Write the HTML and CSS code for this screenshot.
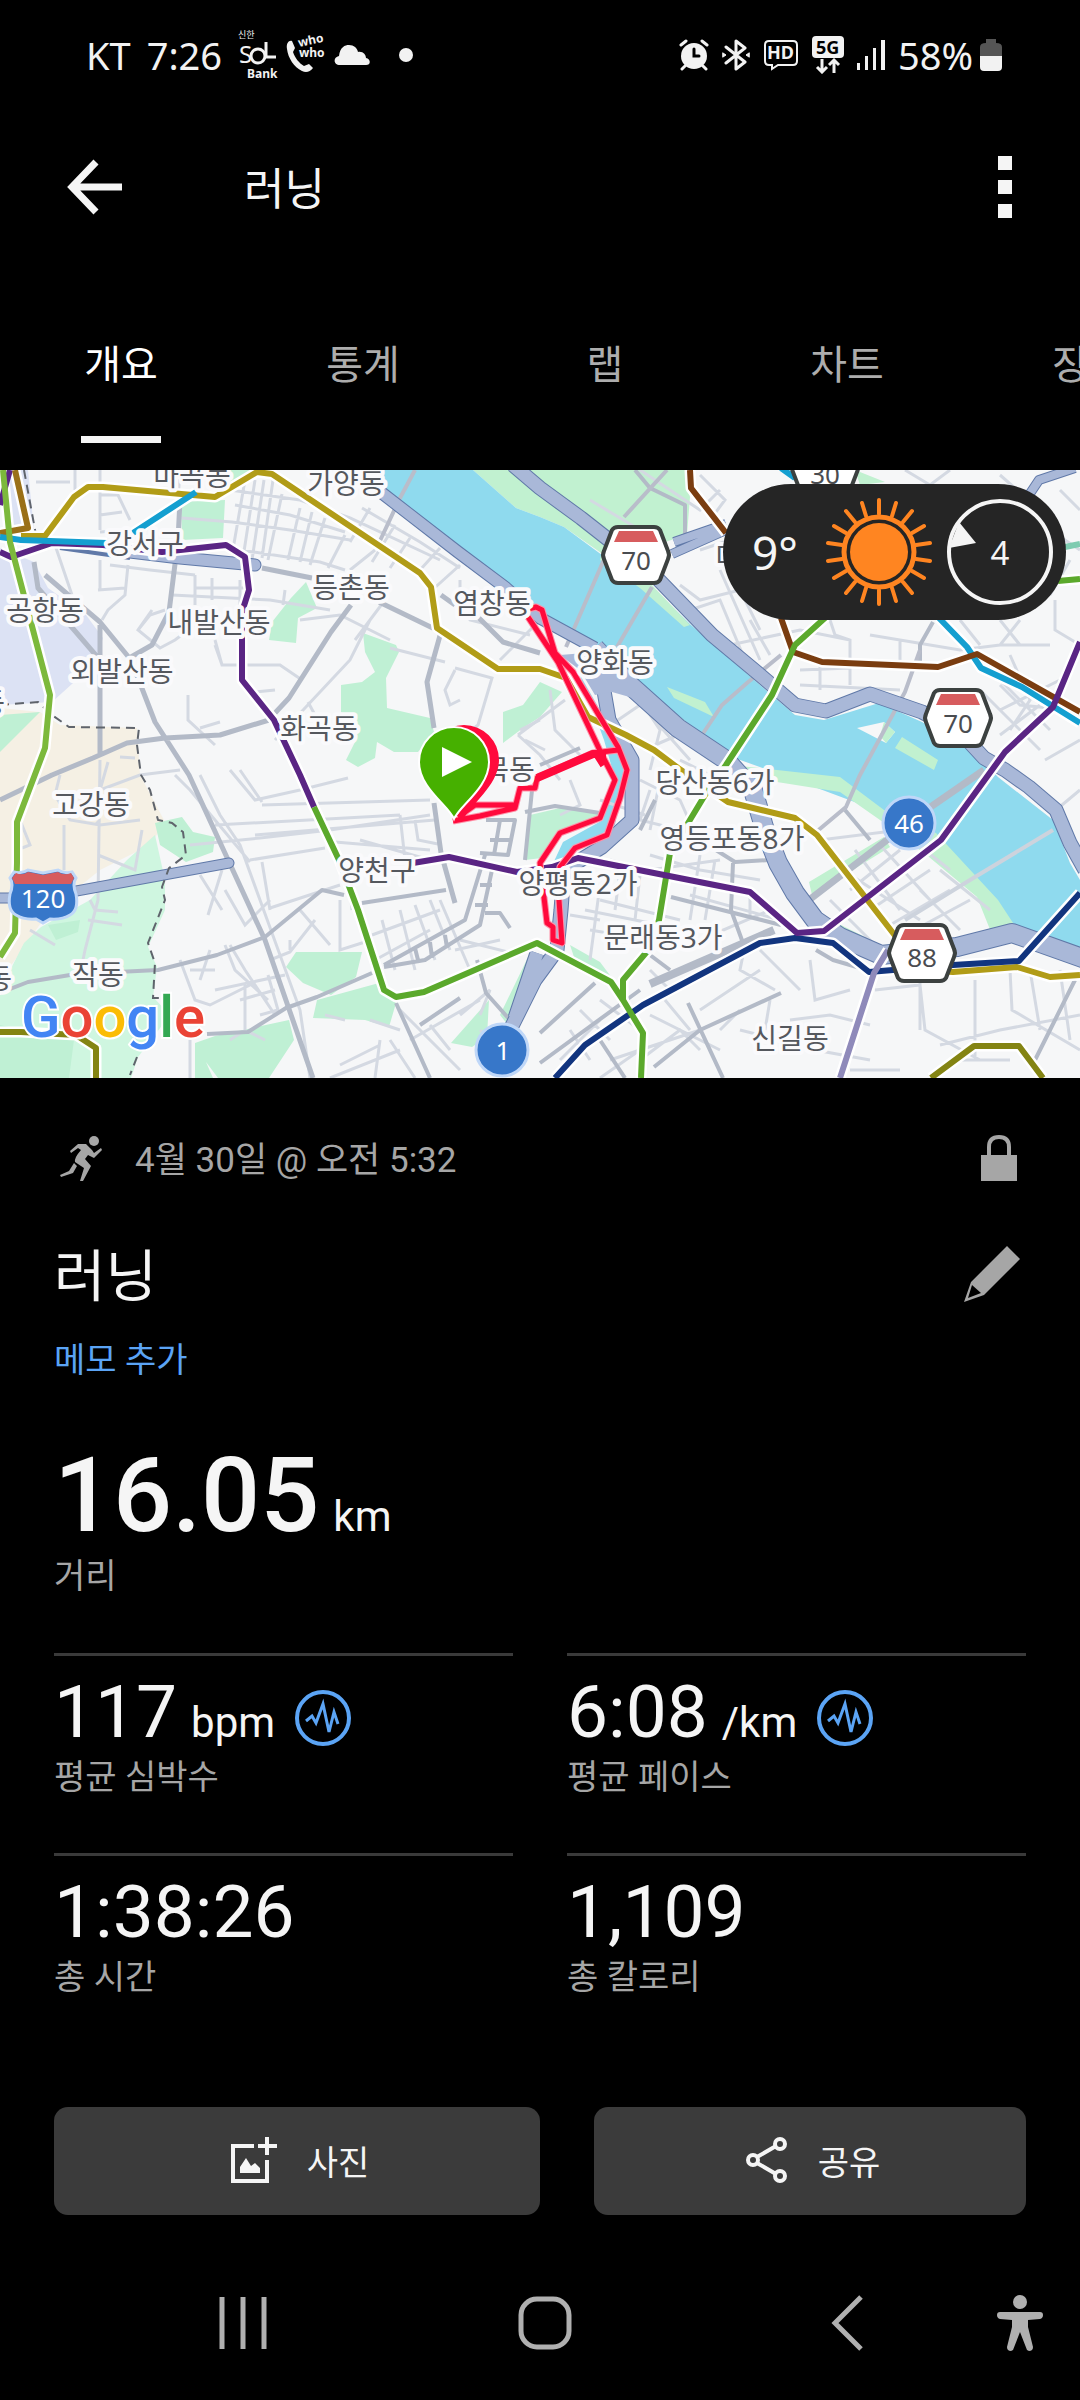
FILE: index.html
```html
<!DOCTYPE html>
<html lang="ko">
    <head>
        <meta charset="UTF-8" />
        <meta name="viewport" content="width=device-width, initial-scale=1.0" />
        <title>러닝</title>
        <link rel="stylesheet" href="styles.css">
    </head>
    <body>
        <div class="status-bar">
            <div class="status-left">
                <span>KT</span>
                <span>7:26</span>
                <div class="status-apps">
                    <svg width="42" height="56" viewBox="0 -2 42 56" fill="none" stroke="#f2f2f2" stroke-width="3">
                        <text x="0" y="9" class="app-tiny">신한</text>
                        <text x="1" y="34" class="app-sol">S</text>
                        <circle cx="20" cy="27" r="7" />
                        <path d="M28 13V28H38" />
                        <text x="9" y="49" class="app-bank">Bank</text>
                    </svg>
                    <svg width="44" height="48" viewBox="0 -6 44 48" fill="#f2f2f2">
                        <path d="M2 12C1 6 4 3 7 4L10 11L8 15C10 21 14 26 19 29L24 27L28 31C25 35 21 36 17 34C9 30 3 21 2 12Z" />
                        <text x="14" y="10" class="app-who" transform="rotate(-12 14 10)">who</text>
                        <text x="14" y="20" class="app-who">who</text>
                    </svg>
                    <svg width="36" height="22" viewBox="0 0 36 22" fill="#f2f2f2">
                        <path d="M6 21C-1 21-1 13 5 12C6 3 11 1 15 1C20 1 23 4 24 8C29 7 32 11 32 14C37 15 37 21 32 21Z" />
                    </svg>
                    <span class="more-dot"></span>
                </div>
            </div>
            <div class="status-right">
                <svg width="30" height="32" viewBox="0 0 30 32" fill="none" stroke="#f2f2f2" stroke-width="3" stroke-linecap="round">
                    <circle cx="15" cy="17" r="13" fill="#f2f2f2" stroke="none" />
                    <path d="M2 6L7 2M28 6L23 2M6 27L3 30M24 27L27 30" />
                    <path d="M15 10V17H20" stroke="#000" />
                </svg>
                <svg width="28" height="32" viewBox="0 0 28 32" fill="none" stroke="#f2f2f2" stroke-width="3" stroke-linejoin="round" stroke-linecap="round">
                    <path d="M4 8L23 23L14 30V2L23 9L4 24" />
                    <path d="M1 14L4 16L1 18ZM27 14L24 16L27 18Z" stroke-width="1" fill="#f2f2f2" />
                </svg>
                <svg width="36" height="32" viewBox="0 0 36 32" fill="none" stroke="#f2f2f2" stroke-width="2">
                    <path d="M6 2H30Q34 2 34 6V22Q34 26 30 26H15L9 30V26H6Q2 26 2 22V6Q2 2 6 2Z" />
                    <text x="4" y="20" class="hd">HD</text>
                </svg>
                <svg width="32" height="38" viewBox="0 0 32 38" fill="none" stroke="#f2f2f2" stroke-width="3">
                    <rect x="0" y="0" width="32" height="22" rx="4" fill="#f2f2f2" stroke="none" />
                    <text x="4" y="18" class="five-g">5G</text>
                    <path d="M10 23V35M5 31L10 36L15 31M22 37V25M17 29L22 24L27 29" />
                </svg>
                <svg width="28" height="30" viewBox="0 0 28 30" fill="#f2f2f2">
                    <rect x="0" y="23" width="3" height="7" />
                    <rect x="8" y="16" width="3" height="14" />
                    <rect x="16" y="8" width="3" height="22" />
                    <rect x="24" y="0" width="4" height="30" />
                </svg>
                <span class="battery-text">58%</span>
                <svg width="22" height="32" viewBox="0 0 22 32">
                    <path d="M6 0H16V4Q22 4 22 8V17H0V8Q0 4 6 4Z" fill="#555" />
                    <path d="M0 17H22V28Q22 32 18 32H4Q0 32 0 28Z" fill="#f2f2f2" />
                </svg>
            </div>
        </div>

        <header class="app-bar">
            <button class="icon-button" aria-label="뒤로">
                <svg width="56" height="56" viewBox="0 0 56 56" fill="none" stroke="#f5f5f5" stroke-width="7">
                    <path d="M29 3L5 28L29 53M6 28H55" />
                </svg>
            </button>
            <h1>러닝</h1>
            <button class="icon-button menu" aria-label="메뉴">
                <svg width="14" height="62" viewBox="0 0 14 62" fill="#f5f5f5">
                    <rect width="14" height="14" />
                    <rect y="24" width="14" height="14" />
                    <rect y="48" width="14" height="14" />
                </svg>
            </button>
        </header>

        <nav class="tabs">
            <a href="#overview" class="tab active">개요</a>
            <a href="#stats" class="tab">통계</a>
            <a href="#laps" class="tab">랩</a>
            <a href="#charts" class="tab">차트</a>
            <a href="#gear" class="tab">장비</a>
        </nav>

        <div class="map">
            <svg class="map-canvas" viewBox="0 0 1080 608">
                <defs>
                    <g id="hex">
                        <path d="M-18 -28H18Q22 -28 24 -25L32 -4Q34 0 32 4L24 25Q22 28 18 28H-18Q-22 28 -24 25L-32 4Q-34 0 -32 -4L-24 -25Q-22 -28 -18 -28Z" fill="#fff" stroke="#3c4140" stroke-width="4" />
                        <path d="M-17 -24H17L22 -13H-22Z" fill="#d75c5e" />
                    </g>
                </defs>
                <rect width="1080" height="608" fill="#f6f7f8" />

                <!-- land use -->
                <path fill="#dce2f4" d="M0 78L34 92L48 118L86 145L103 168L93 195L52 232L0 235Z M8 0H28L34 60L26 50L12 62Z" />
                <path fill="#f5f0e4" d="M0 238L40 242L60 255L137 258L140 305L165 352L150 375L100 400L50 440L15 490L0 510Z" />
                <path fill="#cff6e0" d="M155 365L165 410V440L148 477L157 497L153 527L170 545L138 587L131 608H0V520L24 473L41 457L90 430L127 390Z" />
                <path fill="#bff0d4" d="M0 245L40 242L0 282Z M155 353L182 347L193 362L215 367L213 382L186 392L160 375Z M48 455L80 450L78 462L56 470Z M0 555L30 562L74 570L69 608H0Z
                    M181 32L225 30L223 68L182 70Z M225 0H265L240 18L228 16Z
                    M291 128L306 112L317 138L298 148L296 173L269 170L272 152Z
                    M363 163L396 175L399 182L386 208L387 238L430 248L434 262L418 282L394 282L377 272L375 288L358 297L346 290L355 272L341 242V215L362 212L375 202L365 182Z
                    M503 242L523 235L540 212L562 222L540 247L523 258L503 273Z
                    M296 482L362 482L356 507L331 525L303 513L286 497Z
                    M317 530L379 513L396 533L389 557L365 550L313 548Z
                    M195 573L215 566L289 550L294 570L269 608H218L206 592L213 608H195Z
                    M451 573L489 530L487 567L472 577Z M500 545L530 483L520 540L508 555Z
                    M530 345L560 338L605 345L600 350L560 363L542 388L525 390Z M570 475L600 492L612 508L575 490Z" />
                <path fill="#c1f1d0" d="M473 0H685L690 27L687 65L640 80L604 85L564 57L540 47L516 38Z M855 0L885 12L860 15Z" />

                <!-- river -->
                <path fill="#8fdaee" d="M383 0H473L516 38L540 47L564 57L602 85L650 115L691 155L760 215L795 245L824 250L879 233L922 252L970 278L998 307L1053 350L1070 393L1080 410V490L1015 460L998 433L963 410L884 343L777 303L726 285L633 212L597 175L540 145L510 118L383 20Z" />
                <path fill="#8fdaee" d="M580 205L600 240L618 280L624 300L615 355L570 385L550 400L563 372L603 350L614 305L604 270Z" />
                <path fill="#c1f1d0" d="M633 208L650 222L690 255L740 296L777 300L840 307L884 340L936 363L998 430L1019 462H991L977 427L929 387L880 350L840 322L777 312L726 292L660 240Z
                    M667 217L705 232L714 247L674 228Z M902 267L938 290L934 300L895 278Z M809 412L884 367L890 377L812 425Z M815 442L871 470L900 484L840 466Z M602 80L650 113L690 155L684 157L640 118L600 90Z" />
                <path fill="#f6f7f8" d="M857 258L884 252L895 262L886 273Z" />
                <path fill="#c1f1d0" d="M884 252L895 262L886 273L880 266Z" />

                <!-- minor streets -->
                <g fill="none" stroke="#d4d9e2" stroke-width="3">
                    <path d="M100 0V60M100 25H118L130 50M100 62L130 60M75 0V20M36 12H70M100 90V120M180 0L178 30M100 45L122 42M55 75L72 125M110 95L150 100L195 105
                        M182 48L232 52L290 60L350 70M230 20L300 30L350 48L440 90M235 35L290 45L345 62M240 80L320 92L345 100
                        M245 10L232 85M255 10L243 88M264 10L252 90M273 10L262 88M282 24L268 90M300 38L288 90M312 42L300 92M325 48L310 95M345 65L328 98M375 80L350 100
                        M370 38L350 72M395 55L372 92M410 68L390 98M440 78L420 100M460 95L430 122M362 38L420 72L460 98" />
                    <path d="M172 125L270 130L330 140M195 105V135M212 108V130M240 110V135M195 118H250M285 120L283 135M128 95L125 125L108 140L102 150M98 120L125 118
                        M152 140L138 160L160 178L175 170L195 155M138 160L150 145L165 140M215 170L222 195H280L302 210M222 195L215 175M188 225V250L215 275M200 258L220 252M255 222L275 220
                        M300 150L340 145L390 170M370 150L350 190L275 270M385 130L355 170M390 178L445 192M455 125L470 150L530 165M460 110V125L490 140
                        M455 200L445 220L450 235L460 230M455 198L492 208L478 255L465 265M500 190L540 150M520 260L540 250M308 232L315 245M525 270L545 280" />
                    <path d="M60 305L55 325L70 350L100 355L140 350M100 290L98 430L85 480L80 505M64 355V400M95 355L100 350M98 385L135 400L142 360M90 430L95 440L118 442M88 450L122 455M20 350L30 375L22 378M30 460L55 475M108 292L100 320L140 305L180 300M120 287L135 288" />
                    <path d="M200 305L220 345L240 375L260 430L300 540L310 608M230 300L255 330L300 320L348 308M240 300L262 332M262 335L430 330M255 365L435 350M190 375L260 368L330 360L430 345
                        M215 355L400 345M250 390L325 378M262 392L270 440M335 372L430 380M360 370L430 390L435 385M400 345L405 390M415 350L418 370L438 374M175 305L190 320L250 392
                        M200 405L222 440M222 400L208 445M225 420L245 455L270 430M230 475L245 500L275 545M270 490L290 482L315 450M300 440L330 475M290 470V480M270 438L340 415M340 430V480L365 472M350 420L352 440
                        M180 490L195 530L210 535L250 515M190 500H215M210 480L200 510M225 475L235 500L268 530M215 520L285 505M240 530L275 520M245 515V560L265 570M268 505L278 540L260 545M230 570L245 560" />
                    <path d="M382 450L395 500M400 440L415 500M415 435L435 490M430 430L450 480M372 465L440 440M375 490L430 460M440 430L470 500M455 480L500 470M460 470L520 485M370 550L400 560M380 575L340 595M345 550L325 545M400 540L460 600M410 570L480 530M430 555L450 580M380 570L375 608M390 570L415 608M480 560L510 590M330 608L400 580M460 545L490 520L480 545M190 570V608" />
                    <path d="M640 310L680 330L700 375M650 320L640 350L700 365M660 310L650 360M600 330L645 345M610 390L650 400L720 390M620 400L615 440M640 405L635 450M600 430L680 450M585 440L660 455M590 460L650 470M600 415L590 490M570 445L600 450M700 385L690 450M715 390L705 450M750 420V450M650 385L700 400L760 410M690 425L780 450M700 470L770 440M720 300L740 325" />
                    <path d="M570 560L590 590M580 540L610 570M600 530L640 560M560 590L600 550M610 590L700 560M650 545L720 580M665 530L690 560M640 590L680 560L700 580M600 608L640 580M720 560L740 540M700 540L760 500M745 475L740 500L775 520M760 480L800 520M810 490L815 530L850 520M790 550L830 545L870 555M820 560L815 580L870 590M875 520L920 515L925 560L980 590M920 500V560M975 510V590M1010 500L1012 540L1080 580M1030 500L1040 560M940 575L1000 560L1080 545M1060 500L1070 570M850 600H900M960 590L1010 590M740 560L800 575M770 530L765 560M650 500L670 520" />
                    <path d="M820 370L900 360L950 400M835 395L920 450M855 380L900 440M880 375L930 430M850 420L900 380M870 440L930 400M890 455L950 420M905 465L970 430M830 430L880 480M920 420L960 460M940 400L990 440" />
                    <path d="M590 30L640 60M640 0L700 40L720 20M700 80L730 70L745 130M680 115L700 130L740 120L760 160M690 140L720 130L745 190M720 100L760 190M750 150L770 185M730 175L800 160L850 170M700 5L725 30L710 50M830 150L835 165L850 170V215M800 200L850 198M800 215L900 220M820 190V220M870 165L960 180L1000 175M900 170V190M1000 215L1020 235L1070 240M990 200L1050 260M1010 185L1030 230L1010 260M1000 240L1060 210M980 220L1040 280M1000 265L1040 235M960 150L980 175M1020 80L1050 100L1040 130M1050 60L1080 80M1055 130V160L1080 175M1000 150L1020 175M1020 150L1000 175H1050M1070 90L1050 125M905 0L930 15L950 0M1000 5L1040 40M1060 20L1080 40M1045 290L1080 270M1050 345L1080 320" />
                    <path d="M518 265L540 285L560 310M550 220L555 260L580 285M518 265L565 230M570 310L580 335L560 345M640 230L660 260L650 300M650 245L690 290M655 275L690 260M680 290L720 310M618 250L640 235" />
                </g>

                <!-- main streets -->
                <g fill="none" stroke="#b3bac7" stroke-width="5" stroke-linejoin="round">
                    <path d="M100 155V285M34 92L38 118L100 190M45 105L100 152L131 190L155 252L189 305L265 470L313 608M180 30L178 70L169 142L152 175L131 187M351 135L331 162L289 228L275 243M379 132L441 162L427 212L434 258M434 333L441 383L455 433M262 98L312 108
                        M269 250L220 265L165 268L127 273L93 288L52 305L0 330M479 148L503 172L540 183M441 125L455 135" />
                    <path d="M0 523L28 512L76 504L158 500L217 485L265 467L322 420L344 425M362 433L446 420M207 564L248 562L286 538L317 527L372 503M384 495L420 475L465 450L485 385M384 497L425 490L480 455L492 400M415 478L418 490M430 472L432 488M445 465L447 478M396 533L430 608M477 490L486 523L510 550M486 350H515L508 385L480 383M490 370H512M500 350L494 385M532 320L525 390M480 415H492M475 435H488M485 443H500L510 458M420 555L460 528" stroke-width="4" />
                    <path d="M671 427L781 455M733 393L731 440L743 473M816 480L833 490L867 500M688 533L723 608M654 597L700 560L781 523M540 563L595 513M540 593L640 520M600 570L625 608M650 485L670 500M1075 510L1050 560L1035 590M700 370L735 392L770 390M820 420L880 375M525 342L555 336L600 343M655 330L640 360M540 295L580 278" stroke-width="4" />
                    <path d="M650 514L774 460" stroke-width="8" />
                    <path d="M635 0L650 18L685 35V65M933 152L920 175V200M845 340L870 370" stroke-width="4" />
                </g>
                <g fill="none" stroke="#b9bdca" stroke-width="4">
                    <path d="M667 0L624 47M609 78L566 177M652 117L617 177M781 185L747 213L722 235L702 265M920 180L905 222L860 305L846 337L815 363M415 0L400 28L378 75" />
                    <path d="M984 300L926 340L809 430" stroke-width="7" stroke="#b3bac7" />
                    <path d="M1053 360L970 410L905 450" stroke="#cdd3dd" />
                </g>

                <!-- expressways -->
                <g fill="none" stroke="#6079a8" stroke-linejoin="round">
                    <path d="M513 -5L540 18L581 48L609 70L654 105L712 165L760 205L795 235L826 241L870 224L922 242L960 262L984 288L1005 300L1029 317L1056 340L1070 373L1085 400" stroke-width="15" />
                    <path d="M378 20L458 82L506 118L540 148L595 178" stroke-width="13" />
                    <path d="M595 178L630 215L678 258L726 290L753 320L764 357L778 393L795 423L815 450L840 467L881 485L957 477L1012 463L1085 489" stroke-width="20" />
                    <path d="M603 215L609 250L632 290V350L602 377L564 400L561 440L557 480L535 510L510 560M537 483L515 548" stroke-width="15" />
                    <path d="M674 72L726 54M672 84L726 60M1029 25L1039 10L1075 -2" stroke-width="10" />
                    <path d="M-5 428L20 428M60 424L229 393" stroke-width="11" stroke-linecap="round" />
                    <path d="M130 82L180 88L255 95" stroke-width="13" stroke-linecap="round" />
                    <path d="M60 78L130 88" stroke-width="4" />
                </g>
                <g fill="none" stroke="#a9b8d8" stroke-linejoin="round">
                    <path d="M513 -5L540 18L581 48L609 70L654 105L712 165L760 205L795 235L826 241L870 224L922 242L960 262L984 288L1005 300L1029 317L1056 340L1070 373L1085 400" stroke-width="13" />
                    <path d="M378 20L458 82L506 118L540 148L595 178" stroke-width="11" />
                    <path d="M595 178L630 215L678 258L726 290L753 320L764 357L778 393L795 423L815 450L840 467L881 485L957 477L1012 463L1085 489" stroke-width="18" />
                    <path d="M603 215L609 250L632 290V350L602 377L564 400L561 440L557 480L535 510L510 560M537 483L515 548" stroke-width="13" />
                    <path d="M674 72L726 54M672 84L726 60M1029 25L1039 10L1075 -2" stroke-width="8" />
                    <path d="M-5 428L20 428M60 424L229 393" stroke-width="9" stroke-linecap="round" />
                    <path d="M130 82L180 88L255 95" stroke-width="11" stroke-linecap="round" />
                </g>
                <path d="M560 185L597 182L622 205L640 230L612 222L595 225L580 200Z" fill="#a9b8d8" />

                <!-- city border -->
                <path d="M0 235L38 232L52 245L69 257L139 258L137 275L141 305L150 320L158 350L172 353L183 362L186 385L169 398L162 417L165 430L148 473L155 493L153 528H162M137 587L130 605M24 0L36 65" fill="none" stroke="#5f646c" stroke-width="2" stroke-dasharray="9 6" />

                <!-- subway casing -->
                <g fill="none" stroke="#fff" stroke-width="11" stroke-linejoin="round">
                    <path d="M0 82L11 87L52 73L103 75L162 82L226 75L245 87L249 120L242 142V210L274 250L300 305L314 337L339 390L358 440L384 520L396 527L424 522L537 473L611 512L623 530L643 563L641 608" />
                    <path d="M21 66H45L74 27L88 17H103L215 27L257 2L272 4L420 103L431 117L437 158L498 199H540L566 208L588 247L626 265L654 280L678 298L728 332L795 348L817 365L893 463L922 500L953 502L1017 497L1050 507L1080 505" />
                    <path d="M3 0L10 72L50 225L45 278L17 352V393L15 463L0 487M0 562H21L76 565L96 578V608M0 67L21 70L107 73M133 63L196 22M15 0L28 58L0 63" />
                    <path d="M826 147L795 175L772 225L726 295L705 325L670 383L659 450L650 478L623 510V530M413 393L449 387L517 402L552 397L578 388L750 422L797 463L824 461L941 370L1005 282L1053 237L1080 172" />
                    <path d="M690 0L691 18L726 63M781 148L793 182L822 192L938 197L977 184L1080 242M939 148L967 177L981 198L1022 217L1080 253M555 608L585 575L643 535L760 473L795 468L833 473L869 502L953 495L1019 491L1080 423M888 480L874 503L840 608M931 608L974 576H1019L1043 608M1058 111L1080 109" />
                </g>
                <g fill="none" stroke-width="6" stroke-linejoin="round">
                    <path stroke="#5a2584" d="M0 82L11 87L52 73L103 75L162 82L226 75L245 87L249 120L242 142V210L274 250L300 305L314 337M10 0L0 35" />
                    <path stroke="#9a7018" d="M15 0L28 58L0 63" />
                    <path stroke="#b19c17" d="M21 66H45L74 27L88 17H103L215 27L257 2L272 4L420 103L431 117L437 158L498 199H540L566 208L588 247L626 265L654 280L678 298L728 332L795 348L817 365L893 463L922 500L953 502L1017 497L1050 507L1080 505" />
                    <path stroke="#149fd0" d="M0 67L21 70L107 73M133 63L196 22M781 -2L795 8M939 148L967 177L981 198L1022 217L1080 253" />
                    <path stroke="#7a3d10" d="M690 0L691 18L726 63M781 148L793 182L822 192L938 197L977 184L1080 242" />
                    <path stroke="#7cb93c" d="M3 0L10 72L50 225L45 278L17 352V393L15 463L0 487" />
                    <path stroke="#848413" d="M0 562H21L76 565L96 578V608M931 608L974 576H1019L1043 608" />
                    <path stroke="#12357f" d="M555 608L585 575L643 535L760 473L795 468L833 473L869 502L953 495L1019 491L1080 423" />
                    <path stroke="#5ba92c" d="M314 337L339 390L358 440L384 520L396 527L424 522L537 473L611 512L623 530L643 563L641 608M826 147L795 175L772 225L726 295L705 325L670 383L659 450L650 478L623 510V530M1058 111L1080 109" />
                    <path stroke="#5a2584" d="M413 393L449 387L517 402L552 397L578 388L750 422L797 463L824 461L941 370L1005 282L1053 237L1080 172" />
                    <path stroke="#8f8aba" d="M888 480L874 503L840 608" />
                    <path stroke="#7ecbb0" d="M1065 77L1080 74" />
                </g>

                <!-- route -->
                <g fill="none" stroke-linejoin="round">
                    <path stroke="#ff8fa6" stroke-width="7" d="M528 147L558 192L603 287L615 310L600 348L560 363L540 393L547 453L553 457V470L562 473L559 430L560 397L575 378L607 365L620 328L627 300L618 277L573 202L555 183L542 140L536 137L528 139M618 280L593 283L537 308L535 318H520L515 338L480 346L453 351M515 335H475L458 347" />
                    <path stroke="#ff0a3c" stroke-width="5" d="M528 147L558 192L603 287L615 310L600 348L560 363L540 393L547 453L553 457V470L562 473L559 430L560 397L575 378L607 365L620 328L627 300L618 277L573 202L555 183L542 140L536 137L528 139M618 280L593 283L537 308L535 318H520L515 338L480 346L453 351M515 335H475L458 347" />
                    <path stroke="#ff0a3c" stroke-width="8" d="M606 284L593 284L537 308M597 284L604 295" />
                </g>

                <g class="place">
                    <text x="192" y="16">마곡동</text>
                    <text x="346" y="24">가양동</text>
                    <text x="145" y="84">강서구</text>
                    <text x="351" y="128">등촌동</text>
                    <text x="45" y="151">공항동</text>
                    <text x="219" y="163">내발산동</text>
                    <text x="492" y="144">염창동</text>
                    <text x="122" y="212">외발산동</text>
                    <text x="319" y="269">화곡동</text>
                    <text x="509" y="310">목동</text>
                    <text x="615" y="203">양화동</text>
                    <text x="715" y="323">당산동6가</text>
                    <text x="732" y="379">영등포동8가</text>
                    <text x="578" y="424">양평동2가</text>
                    <text x="663" y="478">문래동3가</text>
                    <text x="790" y="579">신길동</text>
                    <text x="377" y="411">양천구</text>
                    <text x="91" y="345">고강동</text>
                    <text x="98" y="515">작동</text>
                    <text x="-8" y="243">동</text>
                    <text x="-1" y="519">동</text>
                    <text x="728" y="97">디</text>
                </g>

                <g class="road-number">
                    <use href="#hex" x="825" y="-2" /><text x="825" y="14">30</text>
                    <use href="#hex" x="636" y="85" /><text x="636" y="100">70</text>
                    <use href="#hex" x="958" y="248" /><text x="958" y="263">70</text>
                    <use href="#hex" x="922" y="483" /><text x="922" y="497">88</text>
                </g>
                <g class="road-number light">
                    <circle cx="909" cy="353" r="26" /><text x="909" y="363">46</text>
                    <circle cx="502" cy="580" r="26" /><text x="503" y="590">1</text>
                    <path d="M14 402Q22 404 28 400L43 403L58 400Q64 404 72 402L76 408Q72 414 76 424Q79 440 70 445Q62 450 50 449L43 453L36 449Q24 450 16 445Q7 440 10 424Q14 414 10 408Z" />
                    <path d="M16 403Q22 406 28 402L43 405L58 402Q64 406 71 403L74 408L71 414H15L12 408Z" class="shield-top" />
                    <text x="43" y="438">120</text>
                </g>

                <text x="21" y="567" class="google"><tspan fill="#4285f4">G</tspan><tspan fill="#ea4335">o</tspan><tspan fill="#fbbc05">o</tspan><tspan fill="#4285f4">g</tspan><tspan fill="#34a853">l</tspan><tspan fill="#ea4335">e</tspan></text>

                <!-- finish pin under the start pin -->
                <path d="M463 350C458 338 429 318 429 290A34 34 0 0 1 499 290C499 315 470 335 463 350Z" fill="#ff0a3c" />
                <path d="M454 349C449 336 419 318 419 292A35 35 0 0 1 489 292C489 318 459 336 454 349Z" fill="#46b000" stroke="#fff" stroke-width="2" />
                <path d="M442 277L472 292L442 307Z" fill="#fff" />
            </svg>

            <div class="weather">
                <span class="temp">9°</span>
                <svg width="106" height="110" viewBox="-53 -55 106 110" fill="none" stroke="#ff8521" stroke-width="4" stroke-linecap="round">
                    <circle r="35" stroke-width="5" />
                    <circle r="29" fill="#ff8521" stroke="none" />
                    <path d="M0-38V-52M0 38V52M13-36L17-49M-13-36L-17-49M13 36L17 49M-13 36L-17 49M24-30L33-41M-24-30L-33-41M24 30L33 41M-24 30L-33 41M33-19L45-26M-33-19L-45-26M33 19L45 26M-33 19L-45 26M37-7L51-9M-37-7L-51-9M37 7L51 9M-37 7L-51 9" />
                </svg>
                <svg width="106" height="106" viewBox="-53 -53 106 106">
                    <circle r="51" fill="none" stroke="#f5f5f5" stroke-width="4" />
                    <path d="M-51 -4L-41 -30L-24 -9Z" fill="#f5f5f5" />
                    <text x="0" y="13" class="wind">4</text>
                </svg>
            </div>
        </div>

        <main id="overview">
            <div class="row date-row">
                <svg width="44" height="46" viewBox="0 0 44 46" fill="#a6a6a6">
                    <circle cx="34" cy="6" r="5" />
                    <path d="M18 9L26 9L32 15L34 18L41 13L42 15L34 23L28 20L25 24L31 31L23 46H20L24 33L15 27Q14 23 21 15L18 13L11 18L10 16Z" />
                    <path d="M14 28L17 31L13 38L1 42L0 40L9 36Z" />
                </svg>
                <span class="date">4월 30일 @ 오전 5:32</span>
                <svg class="end lock" width="36" height="46" viewBox="0 0 36 46" fill="#a6a6a6">
                    <rect y="20" width="36" height="26" />
                    <path d="M8 22V12Q8 2 18 2T28 12V22" fill="none" stroke="#a6a6a6" stroke-width="4" />
                </svg>
            </div>
            <div class="row title-row">
                <h2>러닝</h2>
                <button class="icon-button end" aria-label="이름 편집">
                    <svg width="58" height="58" viewBox="0 0 58 58" fill="#a6a6a6">
                        <path fill-rule="evenodd" d="M44 1L57 14L21 50L1 57L8 37ZM9 40L5 53L18 48Z" />
                    </svg>
                </button>
            </div>
            <a href="#memo" class="memo">메모 추가</a>

            <div class="distance">
                <div class="value"><strong>16.05</strong><span class="unit">km</span></div>
                <div class="label">거리</div>
            </div>

            <div class="stats">
                <div class="stat">
                    <div class="value">117<span class="unit">bpm</span>
                        <svg class="pulse" width="56" height="56" viewBox="0 0 56 56" fill="none" stroke="#5ba4f5" stroke-width="4">
                            <circle cx="28" cy="28" r="26" />
                            <path d="M11 31L17 26L21 33L28 14L34 42L39 22L43 34" stroke-width="3" />
                        </svg>
                    </div>
                    <div class="label">평균 심박수</div>
                </div>
                <div class="stat">
                    <div class="value">6:08<span class="unit">/km</span>
                        <svg class="pulse" width="56" height="56" viewBox="0 0 56 56" fill="none" stroke="#5ba4f5" stroke-width="4">
                            <circle cx="28" cy="28" r="26" />
                            <path d="M11 31L17 26L21 33L28 14L34 42L39 22L43 34" stroke-width="3" />
                        </svg>
                    </div>
                    <div class="label">평균 페이스</div>
                </div>
                <div class="stat">
                    <div class="value">1:38:26</div>
                    <div class="label">총 시간</div>
                </div>
                <div class="stat">
                    <div class="value">1,109</div>
                    <div class="label">총 칼로리</div>
                </div>
            </div>

            <div class="actions">
                <button class="action">
                    <svg width="46" height="46" viewBox="0 0 46 46" fill="none" stroke="#f5f5f5" stroke-width="4">
                        <path d="M23 9H2V44H36V23M36 0V18M27 9H46" />
                        <path d="M9 36V30L15 21L20 29L24 26L29 31V36Z" fill="#f5f5f5" stroke="none" />
                    </svg>
                    사진
                </button>
                <button class="action">
                    <svg width="42" height="46" viewBox="0 0 42 46" fill="none" stroke="#f5f5f5" stroke-width="4">
                        <circle cx="7" cy="23" r="5" />
                        <circle cx="34" cy="7" r="5" />
                        <circle cx="34" cy="39" r="5" />
                        <path d="M11 20L30 9M11 26L30 37" />
                    </svg>
                    공유
                </button>
            </div>
        </main>

        <div class="nav-bar">
            <button class="icon-button" aria-label="최근 앱">
                <svg width="50" height="54" viewBox="0 0 50 54" stroke="#b0b0b0" stroke-width="5">
                    <path d="M4 1V53M25 1V53M46 1V53" />
                </svg>
            </button>
            <button class="icon-button" aria-label="홈">
                <svg width="54" height="54" viewBox="0 0 54 54" fill="none" stroke="#b0b0b0" stroke-width="5">
                    <rect x="3" y="3" width="48" height="48" rx="16" />
                </svg>
            </button>
            <button class="icon-button" aria-label="뒤로 가기">
                <svg width="32" height="56" viewBox="0 0 32 56" fill="none" stroke="#b0b0b0" stroke-width="5">
                    <path d="M30 2L4 28L30 54" />
                </svg>
            </button>
            <button class="icon-button" aria-label="접근성">
                <svg width="46" height="56" viewBox="0 0 46 56" fill="#b0b0b0">
                    <circle cx="23" cy="7" r="7" />
                    <path d="M3 17H43Q46 17 46 20T43 24L31 25V32L36 52Q36 56 32 56L30 55L23 37L16 55L14 56Q10 56 10 52L15 32V25L3 24Q0 23 0 20T3 17Z" />
                </svg>
            </button>
        </div>
    </body>
</html>
```

FILE: styles.css
```css
* {
    box-sizing: border-box;
}
body {
    margin: 0;
    min-height: 100vh;
    display: flex;
    flex-direction: column;
    background-color: #000;
    color: #f5f5f5;
    font-family: Roboto, "Noto Sans CJK KR", sans-serif;
}
svg {
    display: block;
    flex-shrink: 0;
}
a {
    text-decoration: none;
}
h1, h2 {
    margin: 0;
    font-weight: 400;
}
.icon-button {
    padding: 0;
    border: none;
    background: none;
    cursor: pointer;
}

/* status bar */
.status-bar {
    height: 110px;
    padding: 0 78px 0 86px;
    display: flex;
    align-items: center;
    justify-content: space-between;
    font-family: "Noto Sans", "Noto Sans CJK KR", sans-serif;
    font-size: 38px;
    color: #f2f2f2;
}
.status-left {
    display: flex;
    align-items: center;
    gap: 16px;
}
.status-right {
    display: flex;
    align-items: center;
    gap: 13px;
}
.status-apps {
    display: flex;
    align-items: center;
    gap: 5px;
}
.battery-text {
    margin-right: -6px;
}
.more-dot {
    width: 14px;
    height: 14px;
    margin-left: 24px;
    border-radius: 50%;
    background-color: #f2f2f2;
}
.app-tiny, .app-sol, .app-bank, .app-who, .hd {
    fill: #f2f2f2;
    stroke: none;
}
.app-tiny {
    font-size: 9px;
}
.app-sol {
    font-size: 24px;
}
.app-bank {
    font-size: 12px;
    font-weight: 700;
}
.app-who {
    font-size: 12px;
    font-weight: 700;
}
.hd {
    font-size: 18px;
    font-weight: 700;
}
.five-g {
    font-size: 18px;
    font-weight: 700;
    fill: #000;
    stroke: none;
}

/* header and tabs */
.app-bar {
    height: 154px;
    padding: 0 68px 0 67px;
    display: flex;
    align-items: center;
}
.app-bar h1 {
    margin-left: 121px;
    padding-bottom: 2px;
    font-size: 44px;
}
.menu {
    margin-left: auto;
}
.tabs {
    height: 206px;
    display: flex;
    overflow: hidden;
}
.tab {
    position: relative;
    flex: 0 0 242px;
    display: flex;
    align-items: center;
    justify-content: center;
    padding-bottom: 10px;
    font-size: 40px;
    color: #adadad;
}
.tab.active {
    color: #fff;
}
.tab.active::after {
    content: "";
    position: absolute;
    bottom: 27px;
    width: 80px;
    height: 7px;
    background-color: #f5f5f5;
}

/* map */
.map {
    position: relative;
}
.map-canvas {
    width: 100%;
    height: auto;
}
.place {
    font-family: "Noto Sans", "Noto Sans CJK KR", sans-serif;
    font-size: 28px;
    text-anchor: middle;
    fill: #55585e;
    stroke: #fafafc;
    stroke-width: 8px;
    stroke-linejoin: round;
    paint-order: stroke;
}
.road-number {
    font-family: "Noto Sans", sans-serif;
    font-size: 26px;
    text-anchor: middle;
    fill: #4a4c50;
}
.light {
    fill: #fff;
}
.light circle, .light path {
    fill: #3777c9;
    stroke: #bfd7f8;
    stroke-width: 3px;
}
.light .shield-top {
    fill: #d75c5e;
    stroke: none;
}
.google {
    font-size: 58px;
    font-weight: 500;
    stroke: #fff;
    stroke-width: 4px;
    paint-order: stroke;
}
.weather {
    position: absolute;
    top: 14px;
    right: 14px;
    height: 136px;
    padding: 0 13px 0 29px;
    display: flex;
    align-items: center;
    border-radius: 68px;
    background-color: #252525;
    font-family: "Noto Sans", sans-serif;
}
.temp {
    width: 74px;
    font-size: 46px;
}
.weather svg + svg {
    margin-left: 15px;
}
.wind {
    font-size: 33px;
    text-anchor: middle;
    fill: #f5f5f5;
}

/* activity */
main {
    padding: 0 54px;
}
.row {
    display: flex;
    align-items: center;
}
.end {
    margin-left: auto;
}
.date-row {
    height: 52px;
    margin-top: 54px;
    padding-left: 6px;
}
.date {
    margin-left: 31px;
    padding-bottom: 4px;
    font-size: 35px;
    color: #a6a6a6;
}
.lock {
    margin-right: 9px;
}
.title-row {
    height: 80px;
    margin-top: 50px;
    padding-right: 5px;
}
.title-row h2 {
    padding-bottom: 6px;
    font-size: 56px;
}
.memo {
    display: block;
    margin-top: 21px;
    font-size: 34px;
    line-height: 50px;
    color: #5ba4f5;
}
.value {
    display: flex;
    align-items: baseline;
    font-size: 73px;
    line-height: 1;
}
.unit {
    margin-left: 14px;
    font-size: 42px;
}
.label {
    margin-top: 4px;
    font-size: 34px;
    line-height: 48px;
    color: #a6a6a6;
}
.distance {
    margin-top: 59px;
}
.distance strong {
    font-size: 104px;
    font-weight: 500;
}
.stats {
    margin-top: 53px;
    display: grid;
    grid-template-columns: 1fr 1fr;
    column-gap: 54px;
}
.stat {
    height: 200px;
    padding-top: 20px;
    border-top: 3px solid #3a3a3a;
}
.pulse {
    margin-top: 10px;
    margin-left: 20px;
    align-self: center;
}
.actions {
    margin-top: 54px;
    display: grid;
    grid-template-columns: 9fr 8fr;
    gap: 54px;
}
.action {
    height: 108px;
    display: flex;
    align-items: center;
    justify-content: center;
    gap: 30px;
    padding: 0 0 2px 6px;
    border: none;
    border-radius: 14px;
    background-color: #3b3b3b;
    color: #f5f5f5;
    font-family: inherit;
    font-size: 34px;
    cursor: pointer;
}

/* system navigation */
.nav-bar {
    margin-top: auto;
    height: 154px;
    padding: 0 38px 0 92px;
    display: grid;
    grid-template-columns: 1fr 1fr 1fr 44px;
    align-items: center;
    justify-items: center;
}
```
